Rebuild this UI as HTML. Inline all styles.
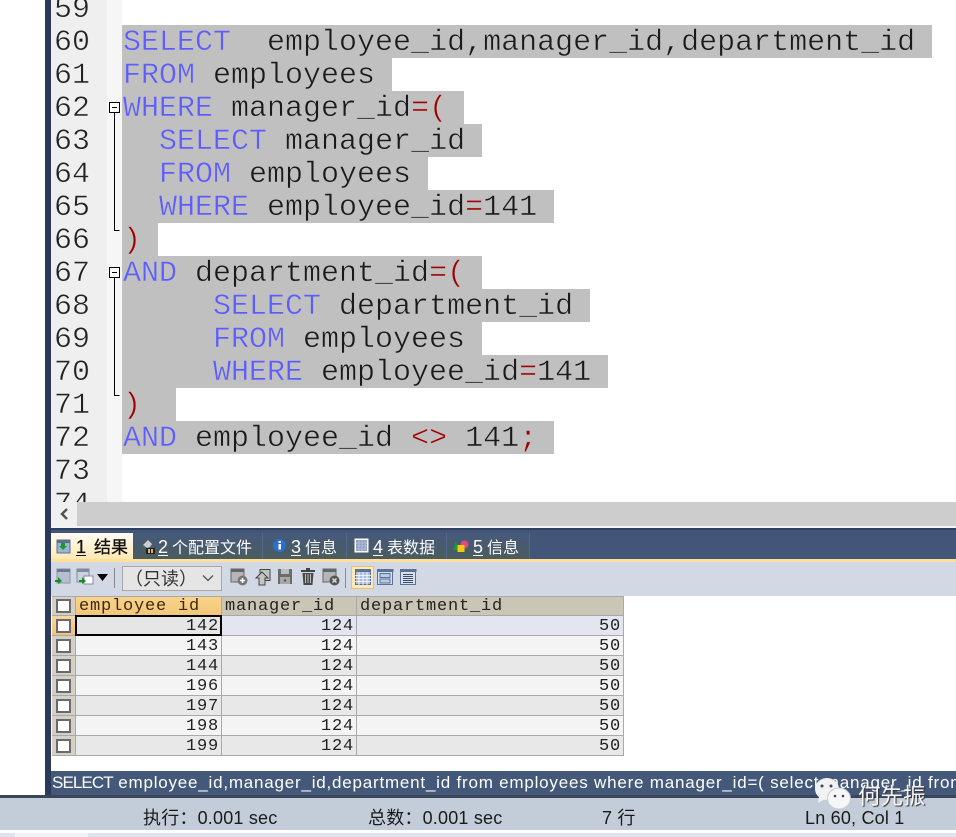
<!DOCTYPE html>
<html><head><meta charset="utf-8">
<style>
html,body{margin:0;padding:0;background:#fff}
#r{position:relative;width:956px;height:837px;overflow:hidden;background:#fff}
#r div,#r span.a,#r svg{position:absolute}
.ln,.cl{font:30px/33px "Liberation Mono",monospace;white-space:pre;color:#1a1a1a}
.ln{left:54px;color:#222;-webkit-text-stroke:.5px #efefef}
.cl{left:123px;-webkit-text-stroke:.5px #c0c0c0}
.hl{left:122px;height:33px;background:#c0c0c0}
.k{color:#5c5cff}.o{color:#a00000}
.tab{top:533px;height:26px;background:linear-gradient(#46597c,#4a5c5f);color:#fff;font:16px/28px "Liberation Sans","Noto Sans CJK SC",sans-serif;white-space:pre;border-right:1px solid #55688a;box-sizing:border-box}
.tab u{font-size:18px;text-underline-offset:2px;margin-right:4px}
.h{top:597px;height:18px;background:#c9c6b6;font:17px/20px "Liberation Mono",monospace;letter-spacing:.8px;color:#222;white-space:pre;padding-left:3px;box-sizing:border-box}
.c{height:19px;text-align:right;box-sizing:border-box;padding-right:2px;font:17px/22px "Liberation Mono",monospace;letter-spacing:.8px;color:#222}
.cb{left:56px;width:15px;height:14px;background:#fff;border:2px solid #6a6a6a;box-sizing:border-box}
.cbw{left:52px;width:23px;height:19px;background:#d4d0c8}
.st{top:807px;font:18px/22px "Liberation Sans","Noto Sans CJK SC",sans-serif;color:#1a1a1a;white-space:pre;letter-spacing:.2px}
</style></head><body><div id="r">

<div style="left:45px;top:0;width:6px;height:796px;background:#2a3a58"></div>
<div style="left:51px;top:0;width:56px;height:502px;background:#efefef"></div>
<div style="left:107px;top:0;width:15px;height:502px;background:#f6f6f6"></div>

<div class="hl" style="top:25px;width:810px"></div>
<div class="hl" style="top:58px;width:270px"></div>
<div class="hl" style="top:91px;width:342px"></div>
<div class="hl" style="top:124px;width:360px"></div>
<div class="hl" style="top:157px;width:306px"></div>
<div class="hl" style="top:190px;width:432px"></div>
<div class="hl" style="top:223px;width:36px"></div>
<div class="hl" style="top:256px;width:360px"></div>
<div class="hl" style="top:289px;width:468px"></div>
<div class="hl" style="top:322px;width:360px"></div>
<div class="hl" style="top:355px;width:486px"></div>
<div class="hl" style="top:388px;width:54px"></div>
<div class="hl" style="top:421px;width:432px"></div>

<div class="ln" style="top:-6px">59</div>
<div class="ln" style="top:27px">60</div>
<div class="ln" style="top:60px">61</div>
<div class="ln" style="top:93px">62</div>
<div class="ln" style="top:126px">63</div>
<div class="ln" style="top:159px">64</div>
<div class="ln" style="top:192px">65</div>
<div class="ln" style="top:225px">66</div>
<div class="ln" style="top:258px">67</div>
<div class="ln" style="top:291px">68</div>
<div class="ln" style="top:324px">69</div>
<div class="ln" style="top:357px">70</div>
<div class="ln" style="top:390px">71</div>
<div class="ln" style="top:423px">72</div>
<div class="ln" style="top:456px">73</div>
<div class="ln" style="top:489px;height:13px;overflow:hidden">74</div>

<div class="cl" style="top:27px"><span class="k">SELECT</span>  employee_id,manager_id,department_id</div>
<div class="cl" style="top:60px"><span class="k">FROM</span> employees</div>
<div class="cl" style="top:93px"><span class="k">WHERE</span> manager_id<span class="o">=(</span></div>
<div class="cl" style="top:126px">  <span class="k">SELECT</span> manager_id</div>
<div class="cl" style="top:159px">  <span class="k">FROM</span> employees</div>
<div class="cl" style="top:192px">  <span class="k">WHERE</span> employee_id<span class="o">=</span>141</div>
<div class="cl" style="top:225px"><span class="o">)</span></div>
<div class="cl" style="top:258px"><span class="k">AND</span> department_id<span class="o">=(</span></div>
<div class="cl" style="top:291px">     <span class="k">SELECT</span> department_id</div>
<div class="cl" style="top:324px">     <span class="k">FROM</span> employees</div>
<div class="cl" style="top:357px">     <span class="k">WHERE</span> employee_id<span class="o">=</span>141</div>
<div class="cl" style="top:390px"><span class="o">)</span></div>
<div class="cl" style="top:423px"><span class="k">AND</span> employee_id <span class="o">&lt;&gt;</span> 141<span class="o">;</span></div>

<svg style="left:107px;top:95px" width="16" height="315" viewBox="0 0 16 315" fill="none" stroke="#000" stroke-width="1">
<rect x="2.500" y="7.500" width="10" height="10" fill="#fff"/><path d="M5 12.500h5M7.500 18v117.500h5"/>
<rect x="2.500" y="172.500" width="10" height="10" fill="#fff"/><path d="M5 177.500h5M7.500 183v117.500h5"/>
</svg>

<!-- scrollbar -->
<div style="left:51px;top:502px;width:905px;height:24px;background:#cdcdcd"></div>
<div style="left:51px;top:502px;width:26px;height:24px;background:#f0f0f0"></div>
<svg style="left:58px;top:507px" width="14" height="14" viewBox="0 0 14 14" fill="none" stroke="#555" stroke-width="2.500"><path d="M9 2L4 7l5 5"/></svg>
<div style="left:51px;top:526px;width:905px;height:2px;background:#f4f4f4"></div>
<div style="left:51px;top:528px;width:905px;height:31px;background:#435679"></div>
<div style="left:51px;top:528px;width:905px;height:2px;background:#2f3f5f"></div>

<!-- tabs -->
<div class="tab" style="left:133px;width:130px;padding-left:25px"><u>2</u>个配置文件</div>
<div class="tab" style="left:263px;width:84px;padding-left:28px"><u>3</u>信息</div>
<div class="tab" style="left:347px;width:100px;padding-left:26px"><u>4</u>表数据</div>
<div class="tab" style="left:447px;width:83px;padding-left:26px"><u>5</u>信息</div>
<div style="left:51px;top:533px;width:82px;height:27px;background:linear-gradient(#fffdf5,#ffe7b0);color:#111;-webkit-text-stroke:.3px #111;font:17px/29px 'Liberation Sans','Noto Sans CJK SC',sans-serif;white-space:pre;padding-left:25px;box-sizing:border-box"><u style="font-size:18px;text-underline-offset:2px;margin-right:8px">1</u>结果</div>

<svg style="left:56px;top:538px" width="16" height="16" viewBox="0 0 16 16"><rect x="1" y="2" width="13" height="13" fill="#9db4d4" stroke="#5a7090"/><rect x="1" y="2" width="13" height="3" fill="#5a7090"/><path d="M5 5h4v3h2l-4 4-4-4h2z" fill="#1a9a2a"/></svg>
<svg style="left:141px;top:539px" width="16" height="16" viewBox="0 0 16 16"><path d="M2 6l5-5 4 4-2 3-3 1z" fill="#ccc"/><rect x="5" y="9" width="9" height="6" fill="#222"/><rect x="7" y="10" width="2" height="4" fill="#e0b050"/><rect x="10" y="10" width="2" height="4" fill="#e0b050"/></svg>
<svg style="left:272px;top:538px" width="15" height="15" viewBox="0 0 15 15"><circle cx="7.500" cy="7.500" r="6.500" fill="#2a6fd0"/><rect x="6.500" y="6" width="2.500" height="5.500" fill="#fff"/><rect x="6.500" y="3" width="2.500" height="2" fill="#fff"/></svg>
<svg style="left:354px;top:538px" width="15" height="15" viewBox="0 0 15 15"><rect x=".5" y=".5" width="14" height="14" fill="#fff"/><rect x="2" y="2" width="11" height="11" fill="#8f9fc4"/><path d="M2 5h11M2 8h11M2 11h11M5 2v11M8 2v11M11 2v11" stroke="#c8d0e4" stroke-width=".6"/></svg>
<svg style="left:453px;top:540px" width="16" height="13" viewBox="0 0 16 13"><path d="M0 10L3 1l2 9z" fill="#1a9a3a"/><circle cx="11.500" cy="4.500" r="4" fill="#e04a80"/><rect x="4.500" y="5" width="7" height="7" fill="#f5c810"/></svg>

<!-- toolbar -->
<div style="left:51px;top:559px;width:905px;height:3px;background:#ffe09a"></div>
<div style="left:51px;top:562px;width:905px;height:34px;background:#d2d9e4"></div>

<svg style="left:54px;top:568px" width="18" height="18" viewBox="0 0 18 18"><rect x="3" y="1" width="13" height="14" fill="#b4bfd2" stroke="#8a94a8"/><rect x="3" y="1" width="13" height="3" fill="#6a7a94"/><path d="M1 12h3v-3l4 4-4 3v-2H1z" fill="#1a8a2a"/></svg>
<svg style="left:76px;top:568px" width="18" height="18" viewBox="0 0 18 18"><rect x="1" y="1" width="12" height="13" fill="#ccd3e0" stroke="#7f8ba0"/><rect x="1" y="1" width="12" height="3" fill="#7f8ba0"/><rect x="8" y="8" width="9" height="8" fill="#fff" stroke="#7f8ba0"/><path d="M3 12h3V9l4 4-4 3v-2H3z" fill="#1a8a2a"/></svg>
<svg style="left:97px;top:574px" width="12" height="8" viewBox="0 0 12 8"><path d="M0 0h11L5.500 7z" fill="#000"/></svg>
<div style="left:114px;top:568px;width:1px;height:20px;background:#888"></div>
<div style="left:122px;top:566px;width:100px;height:25px;background:#e5e5e5;border:1px solid #a8a8a8;box-sizing:border-box;font:18px/24px 'Liberation Sans','Noto Sans CJK SC',sans-serif;color:#333;white-space:pre;padding-left:2px">（只读）</div>
<svg style="left:202px;top:574px" width="13" height="9" viewBox="0 0 13 9" fill="none" stroke="#555" stroke-width="1.300"><path d="M1 1.500l5 5 5-5"/></svg>

<svg style="left:230px;top:568px" width="18" height="18" viewBox="0 0 18 18"><rect x="1" y="1" width="13" height="13" fill="#b6b6b6" stroke="#666"/><rect x="1" y="1" width="13" height="3" fill="#666"/><circle cx="12.500" cy="12.500" r="5" fill="#777"/><path d="M12.500 10v5M10 12.500h5" stroke="#fff" stroke-width="1.500"/></svg>
<svg style="left:254px;top:568px" width="18" height="18" viewBox="0 0 18 18" fill="#c4c4c4" stroke="#444"><rect x="6" y="1.500" width="10" height="11"/><path d="M2 10l6-6 6 6h-3v7H5v-7z"/></svg>
<svg style="left:277px;top:569px" width="16" height="15" viewBox="0 0 16 15"><path d="M1 0h14v15H1z" fill="#6b6b6b"/><rect x="4" y="0" width="8" height="5" fill="#bdbdbd"/><rect x="3" y="8" width="10" height="7" fill="#a8a8a8"/><circle cx="8" cy="11.500" r="1.200" fill="#555"/></svg>
<svg style="left:300px;top:568px" width="16" height="17" viewBox="0 0 16 17"><rect x="1" y="2" width="14" height="2" fill="#444"/><rect x="6" y="0" width="4" height="2" fill="#444"/><path d="M2.500 5h11l-1 12h-9z" fill="#4a4a4a"/><path d="M5.500 6v9M8 6v9M10.500 6v9" stroke="#bbb"/></svg>
<svg style="left:322px;top:568px" width="18" height="18" viewBox="0 0 18 18"><rect x="1" y="1" width="13" height="13" fill="#b6b6b6" stroke="#666"/><rect x="1" y="1" width="13" height="3" fill="#666"/><circle cx="12.500" cy="12.500" r="5" fill="#555"/><path d="M10.500 10.500l4 4M14.500 10.500l-4 4" stroke="#ddd" stroke-width="1.500"/></svg>
<div style="left:345px;top:568px;width:1px;height:20px;background:#888"></div>
<div style="left:351px;top:566px;width:23px;height:23px;background:#fbe9b8;border:1px solid #f0c060;box-sizing:border-box"></div>
<svg style="left:355px;top:569px" width="16" height="17" viewBox="0 0 16 17"><rect x=".5" y=".5" width="15" height="15" fill="#a9bcdc" stroke="#5a7198"/><rect x="0" y="0" width="16" height="3" fill="#5a7198"/><path d="M0 6.500h16M0 9.500h16M0 12.500h16M4 3v13M8 3v13M12 3v13" stroke="#fff" stroke-width=".8"/></svg>
<svg style="left:377px;top:569px" width="17" height="17" viewBox="0 0 17 17" fill="none" stroke="#5a7198"><rect x=".5" y=".5" width="15" height="15" fill="#d8e0ec"/><rect x="0" y="0" width="16" height="2.500" fill="#5a7198"/><rect x="3" y="4.500" width="10" height="4" fill="#b8cbe8"/><rect x="3" y="10" width="10" height="4" fill="#b8cbe8"/></svg>
<svg style="left:400px;top:569px" width="17" height="17" viewBox="0 0 17 17" fill="none" stroke="#5a7198"><rect x=".5" y=".5" width="15" height="15" fill="#d8e0ec"/><rect x="0" y="0" width="16" height="2.500" fill="#5a7198"/><path d="M3 5.500h10M3 7.500h10M3 9.500h10M3 11.500h10M3 13.500h10" stroke="#3c4c6c"/></svg>

<!-- grid -->
<div style="left:51px;top:596px;width:573px;height:160px;background:#a9a9a9"></div>
<div style="left:51px;top:596px;width:1px;height:175px;background:#fff"></div>
<div style="left:52px;top:597px;width:23px;height:18px;background:#d4d0c8"></div>
<div class="cb" style="top:599px"></div>
<div class="h" style="left:76px;width:145px;background:linear-gradient(#f9d48a,#f3c67a);color:#3a2a10">employee id</div>
<div class="h" style="left:222px;width:134px">manager_id</div>
<div class="h" style="left:357px;width:266px">department_id</div>

<div class="cbw" style="top:616px;background:linear-gradient(#f7d8a0,#f0c27a)"></div><div class="cb" style="top:619px"></div>
<div class="c" style="left:76px;top:616px;width:145px;background:#e6e6e6">142</div>
<div class="c" style="left:222px;top:616px;width:134px;background:#e3e6f1">124</div>
<div class="c" style="left:357px;top:616px;width:266px;background:#e3e6f1">50</div>
<div style="left:75px;top:615px;width:147px;height:21px;border:2px solid #000;box-sizing:border-box"></div>

<div class="cbw" style="top:636px"></div><div class="cb" style="top:639px"></div>
<div class="c" style="left:76px;top:636px;width:145px;background:#f4f4f4">143</div>
<div class="c" style="left:222px;top:636px;width:134px;background:#f4f4f4">124</div>
<div class="c" style="left:357px;top:636px;width:266px;background:#f4f4f4">50</div>

<div class="cbw" style="top:656px"></div><div class="cb" style="top:659px"></div>
<div class="c" style="left:76px;top:656px;width:145px;background:#e8e8e8">144</div>
<div class="c" style="left:222px;top:656px;width:134px;background:#e8e8e8">124</div>
<div class="c" style="left:357px;top:656px;width:266px;background:#e8e8e8">50</div>

<div class="cbw" style="top:676px"></div><div class="cb" style="top:679px"></div>
<div class="c" style="left:76px;top:676px;width:145px;background:#f4f4f4">196</div>
<div class="c" style="left:222px;top:676px;width:134px;background:#f4f4f4">124</div>
<div class="c" style="left:357px;top:676px;width:266px;background:#f4f4f4">50</div>

<div class="cbw" style="top:696px"></div><div class="cb" style="top:699px"></div>
<div class="c" style="left:76px;top:696px;width:145px;background:#e8e8e8">197</div>
<div class="c" style="left:222px;top:696px;width:134px;background:#e8e8e8">124</div>
<div class="c" style="left:357px;top:696px;width:266px;background:#e8e8e8">50</div>

<div class="cbw" style="top:716px"></div><div class="cb" style="top:719px"></div>
<div class="c" style="left:76px;top:716px;width:145px;background:#f4f4f4">198</div>
<div class="c" style="left:222px;top:716px;width:134px;background:#f4f4f4">124</div>
<div class="c" style="left:357px;top:716px;width:266px;background:#f4f4f4">50</div>

<div class="cbw" style="top:736px"></div><div class="cb" style="top:739px"></div>
<div class="c" style="left:76px;top:736px;width:145px;background:#e8e8e8">199</div>
<div class="c" style="left:222px;top:736px;width:134px;background:#e8e8e8">124</div>
<div class="c" style="left:357px;top:736px;width:266px;background:#e8e8e8">50</div>

<!-- sql bar -->
<div style="left:51px;top:771px;width:905px;height:24px;background:#44587a;color:#fff;font:17px/24px 'Liberation Sans',sans-serif;letter-spacing:.79px;white-space:pre;overflow:hidden;padding-left:1px"><span style="letter-spacing:-.9px">SELECT</span> employee_id,manager_id,department_id from employees where manager_id=( select manager_id from employees</div>

<div style="left:0;top:795px;width:956px;height:3px;background:#3a4658"></div>
<div style="left:0;top:798px;width:956px;height:32px;background:#c3cdda"></div>
<div style="left:0;top:833px;width:956px;height:4px;background:#dfe4f0"></div>
<div style="left:15px;top:833px;width:73px;height:4px;background:#f1f3f9"></div>

<div class="st" style="left:143px">执行：0.001 sec</div>
<div class="st" style="left:368px">总数：0.001 sec</div>
<div class="st" style="left:602px">7 行</div>
<div class="st" style="left:805px">Ln 60, Col 1</div>

<!-- watermark -->
<svg style="left:812px;top:776px" width="40" height="36" viewBox="0 0 40 36">
<ellipse cx="15" cy="13" rx="12" ry="11" fill="#f2f2f2"/><path d="M7 21l-1 6 7-4z" fill="#f2f2f2"/>
<circle cx="10" cy="10" r="1.500" fill="#445"/><circle cx="19" cy="10" r="1.500" fill="#445"/>
<ellipse cx="27" cy="22.500" rx="11.500" ry="10.500" fill="#f6f6f6" stroke="#c3cdda"/>
<circle cx="23" cy="20" r="1.300" fill="#445"/><circle cx="31" cy="20" r="1.300" fill="#445"/>
</svg>
<div style="left:858px;top:781px;font:22.500px/28px 'Noto Sans CJK SC',sans-serif;color:#f4f4f4;text-shadow:1px 1px 1px #333;white-space:pre">何先振</div>

</div></body></html>
